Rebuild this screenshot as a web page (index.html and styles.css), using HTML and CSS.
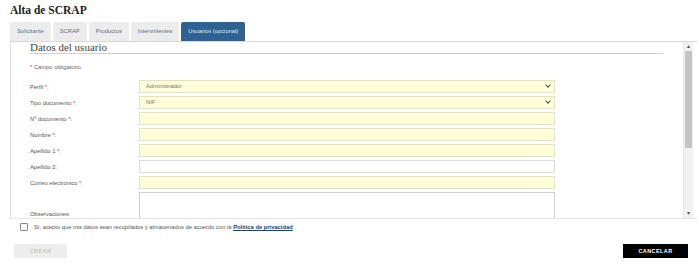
FILE: index.html
```html
<!DOCTYPE html>
<html lang="es">
<head>
  <meta charset="UTF-8">
  <title>Alta de SCRAP</title>
  <link rel="stylesheet" href="styles.css">
</head>
<body>

  <h1 class="title">Alta de SCRAP</h1>

  <div class="tabs">
    <div class="tab">Solicitante</div>
    <div class="tab">SCRAP</div>
    <div class="tab">Productos</div>
    <div class="tab">Intervinientes</div>
    <div class="tab active">Usuarios (opcional)</div>
  </div>

  <div class="panel">
    <div class="panel-body">
      <h2 class="section">Datos del usuario</h2>
      <p class="required"><span class="star">*</span> Campo obligatorio</p>

      <div class="row">
        <label>Perfil <span class="star">*</span>:</label>
        <div class="field yellow select">Administrador<span class="chev"></span></div>
      </div>
      <div class="row">
        <label>Tipo documento <span class="star">*</span>:</label>
        <div class="field yellow select">NIF<span class="chev"></span></div>
      </div>
      <div class="row">
        <label>Nº documento <span class="star">*</span>:</label>
        <div class="field yellow"></div>
      </div>
      <div class="row">
        <label>Nombre <span class="star">*</span>:</label>
        <div class="field yellow"></div>
      </div>
      <div class="row">
        <label>Apellido 1 <span class="star">*</span>:</label>
        <div class="field yellow"></div>
      </div>
      <div class="row">
        <label>Apellido 2:</label>
        <div class="field"></div>
      </div>
      <div class="row">
        <label>Correo electrónico <span class="star">*</span>:</label>
        <div class="field yellow"></div>
      </div>
      <div class="row obs">
        <label>Observaciones:</label>
        <div class="field area"></div>
      </div>
    </div>
    <div class="scrollbar">
      <div class="arrow">&#9652;</div>
      <div class="thumb"></div>
      <div class="track"></div>
      <div class="arrow">&#9662;</div>
    </div>
  </div>

  <div class="consent">
    <span class="box"></span>
    <span>Sí, acepto que mis datos sean recopilados y almacenados de acuerdo con la <a href="#">Política de privacidad</a></span>
  </div>

  <div class="actions">
    <button class="btn btn-create">CREAR</button>
    <button class="btn btn-cancel">CANCELAR</button>
  </div>

</body>
</html>
```

FILE: styles.css
```css
body {
  margin: 0;
  font-family: "Liberation Sans", Arial, sans-serif;
  font-size: 5.8px;
  color: #555;
  background-color: #fff;
}

.title {
  font-family: "Liberation Serif", "Times New Roman", serif;
  font-size: 11.5px;
  font-weight: bold;
  color: #222;
  margin: 0;
  padding: 4px 0 0 10px;
  height: 18px;
}

.tabs {
  display: flex;
  gap: 2px;
  padding-left: 10px;
}

.tab {
  height: 19px;
  line-height: 19px;
  padding: 0 7px;
  background-color: #ececec;
  color: #5a6f85;
  border-radius: 2px 2px 0 0;
}

.tab.active {
  background-color: #2f6192;
  color: #dfe8f2;
}

.panel {
  display: flex;
  margin-left: 10px;
  height: 176px;
  border-top: 1px solid #d8d8d8;
  border-left: 1px solid #e0e0e0;
  border-bottom: 1px solid #e6e6e6;
}

.panel-body {
  flex: 1;
  overflow: hidden;
  padding: 0 20px 0 19px;
}

.section {
  font-family: "Liberation Serif", "Times New Roman", serif;
  font-weight: normal;
  font-size: 11px;
  color: #444;
  margin: 0;
  padding: 0 0 1px;
  border-bottom: 1px solid #cfcfcf;
  line-height: 10px;
}

.required {
  margin: 10px 0 10px;
  color: #666;
}

.star {
  color: #d33;
}

.row {
  display: flex;
  align-items: center;
  margin-bottom: 3px;
}

.row label {
  width: 109px;
}

.field {
  position: relative;
  width: 408px;
  height: 11px;
  line-height: 11px;
  padding-left: 6px;
  border: 1px solid #dcdcdc;
  background-color: #fff;
  color: #777;
}

.field.yellow {
  background-color: #fffed9;
  border-color: #e4e2c4;
}

.chev {
  position: absolute;
  right: 4px;
  top: 2px;
  width: 3px;
  height: 3px;
  border-right: 1px solid #555;
  border-bottom: 1px solid #555;
  transform: rotate(45deg);
}

.row.obs {
  align-items: flex-start;
}

.row.obs label {
  margin-top: 19px;
}

.field.area {
  height: 40px;
  border-color: #cfcfcf;
}

.scrollbar {
  width: 9px;
  margin-right: 4px;
  display: flex;
  flex-direction: column;
  background-color: #f1f1f1;
  border-left: 1px solid #e8e8e8;
}

.arrow {
  height: 9px;
  line-height: 9px;
  text-align: center;
  font-size: 6px;
  color: #555;
}

.thumb {
  height: 97px;
  margin: 0 1px;
  background-color: #c4c4c4;
}

.track {
  flex: 1;
}

.consent {
  display: flex;
  align-items: center;
  gap: 6px;
  padding: 4px 0 0 20px;
  color: #555;
}

.box {
  width: 6px;
  height: 6px;
  border: 1px solid #888;
  border-radius: 1px;
}

.consent a {
  color: #1f3f72;
  font-weight: bold;
}

.actions {
  display: flex;
  justify-content: space-between;
  padding: 13px 9px 0 14px;
}

.btn {
  font-family: "Liberation Sans", Arial, sans-serif;
  font-size: 5.5px;
  font-weight: bold;
  letter-spacing: 0.4px;
  border: none;
  height: 14px;
  padding: 0;
}

.btn-create {
  width: 53px;
  background-color: #ededed;
  color: #c6c6c6;
}

.btn-cancel {
  width: 65px;
  background-color: #000;
  color: #fff;
}
```
